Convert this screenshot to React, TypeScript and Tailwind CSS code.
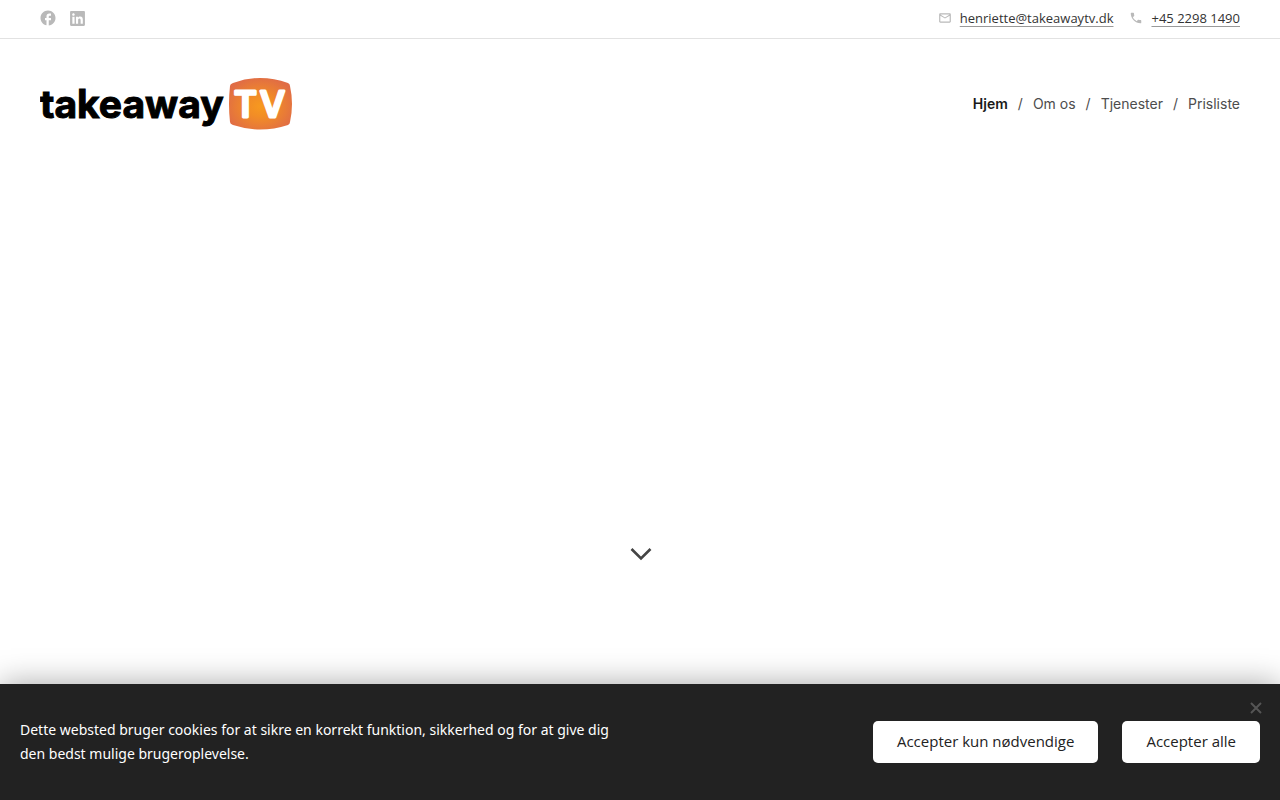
import { FaLinkedin } from 'react-icons/fa'
import { MdFacebook, MdMailOutline, MdPhone } from 'react-icons/md'

const menu = [
  { label: 'Hjem', href: '#hjem' },
  { label: 'Om os', href: '#om-os' },
  { label: 'Tjenester', href: '#tjenester' },
  { label: 'Prisliste', href: '#prisliste' },
]

function TopBar() {
  const link = 'text-[#333] underline decoration-[#999] decoration-1 underline-offset-3'

  return (
    <div className="flex items-center justify-between border-b border-[#e2e2e2] px-10 pt-2 pb-[10px] text-[13px] leading-5">
      <div className="flex items-center gap-3 -ml-px text-[#b9b9b9]">
        <a href="#facebook" aria-label="Facebook">
          <MdFacebook size={18} />
        </a>
        <a href="#linkedin" aria-label="LinkedIn">
          <FaLinkedin size={17} />
        </a>
      </div>
      <div className="flex items-center gap-4">
        <div className="flex items-center gap-2">
          <MdMailOutline size={14} className="text-[#b9b9b9]" />
          <a href="mailto:henriette@takeawaytv.dk" className={link}>henriette@takeawaytv.dk</a>
        </div>
        <div className="flex items-center gap-2">
          <MdPhone size={14} className="text-[#b9b9b9]" />
          <a href="tel:+4522981490" className={link}>+45 2298 1490</a>
        </div>
      </div>
    </div>
  )
}

function Logo() {
  return (
    <svg width="253" height="54" viewBox="0 0 253 54" className="font-['Inter',sans-serif]">
      <defs>
        <radialGradient id="screen" cx="50%" cy="55%" r="58%">
          <stop offset="0" stopColor="#f7991f" />
          <stop offset="0.35" stopColor="#f28d26" />
          <stop offset="1" stopColor="#e06c45" />
        </radialGradient>
      </defs>
      <text x="0" y="41" fontSize="39" fontWeight="700" fill="#000" stroke="#000" strokeWidth="1">takeaway</text>
      <path
        d="M193 6Q220-4 248 6Q250 7 250 9Q254 27 250 45Q250 47 248 48Q220 57 193 48Q190 47 190 45Q188 27 190 9Q190 7 193 6Z"
        fill="url(#screen)"
      />
      <g fontSize="35" fontWeight="500" fill="#fff" stroke="#fff" strokeWidth="3" strokeLinejoin="round">
        <text x="194" y="40">T</text>
        <text x="220" y="40">V</text>
      </g>
    </svg>
  )
}

function Header() {
  return (
    <header className="flex items-center justify-between px-10 pt-[38px]">
      <a href="#hjem" aria-label="takeaway TV">
        <Logo />
      </a>
      <nav>
        <ul className="flex items-center gap-[10px] font-['Inter',sans-serif] text-sm leading-5 text-[#4d4d4d]">
          {menu.map((item, i) => (
            <li key={item.href} className="flex items-center gap-[10px]">
              {i > 0 && <span>/</span>}
              <a href={item.href} className={i === 0 ? 'font-semibold text-[#1a1a1a]' : ''}>{item.label}</a>
            </li>
          ))}
        </ul>
      </nav>
    </header>
  )
}

function CookieBar() {
  const button = 'rounded-[5px] bg-white px-6 pt-2 pb-[10px] text-[15px] leading-6 text-[#222] cursor-pointer'

  return (
    <section className="relative flex items-center justify-between bg-[#222] px-5 py-[34px] shadow-[0_0_30px_rgba(0,0,0,0.35)]">
      <p className="max-w-[600px] font-['Noto_Sans','Open_Sans',sans-serif] text-sm leading-6 text-white">
        Dette websted bruger cookies for at sikre en korrekt funktion, sikkerhed og for at give dig den bedst mulige brugeroplevelse.
      </p>
      <div className="flex shrink-0 gap-6">
        <button className={button}>Accepter kun nødvendige</button>
        <button className={button}>Accepter alle</button>
      </div>
      <button aria-label="Luk" className="absolute right-4 top-4 text-[#555] cursor-pointer">
        <svg width="16" height="16" viewBox="0 0 16 16" fill="none" stroke="currentColor" strokeWidth="2">
          <path d="M3 3L13 13M13 3L3 13" />
        </svg>
      </button>
    </section>
  )
}

export default function App() {
  return (
    <div className="flex min-h-screen flex-col bg-white font-['Open_Sans',sans-serif]">
      <TopBar />
      <Header />
      <main className="flex grow flex-col items-center justify-end pb-[123px]">
        <a href="#indhold" aria-label="Rul ned">
          <svg width="24" height="14" viewBox="0 0 24 14" fill="none" stroke="#444" strokeWidth="2.6">
            <path d="M3.5 2L13 11.5L22.5 2" />
          </svg>
        </a>
      </main>
      <CookieBar />
    </div>
  )
}
